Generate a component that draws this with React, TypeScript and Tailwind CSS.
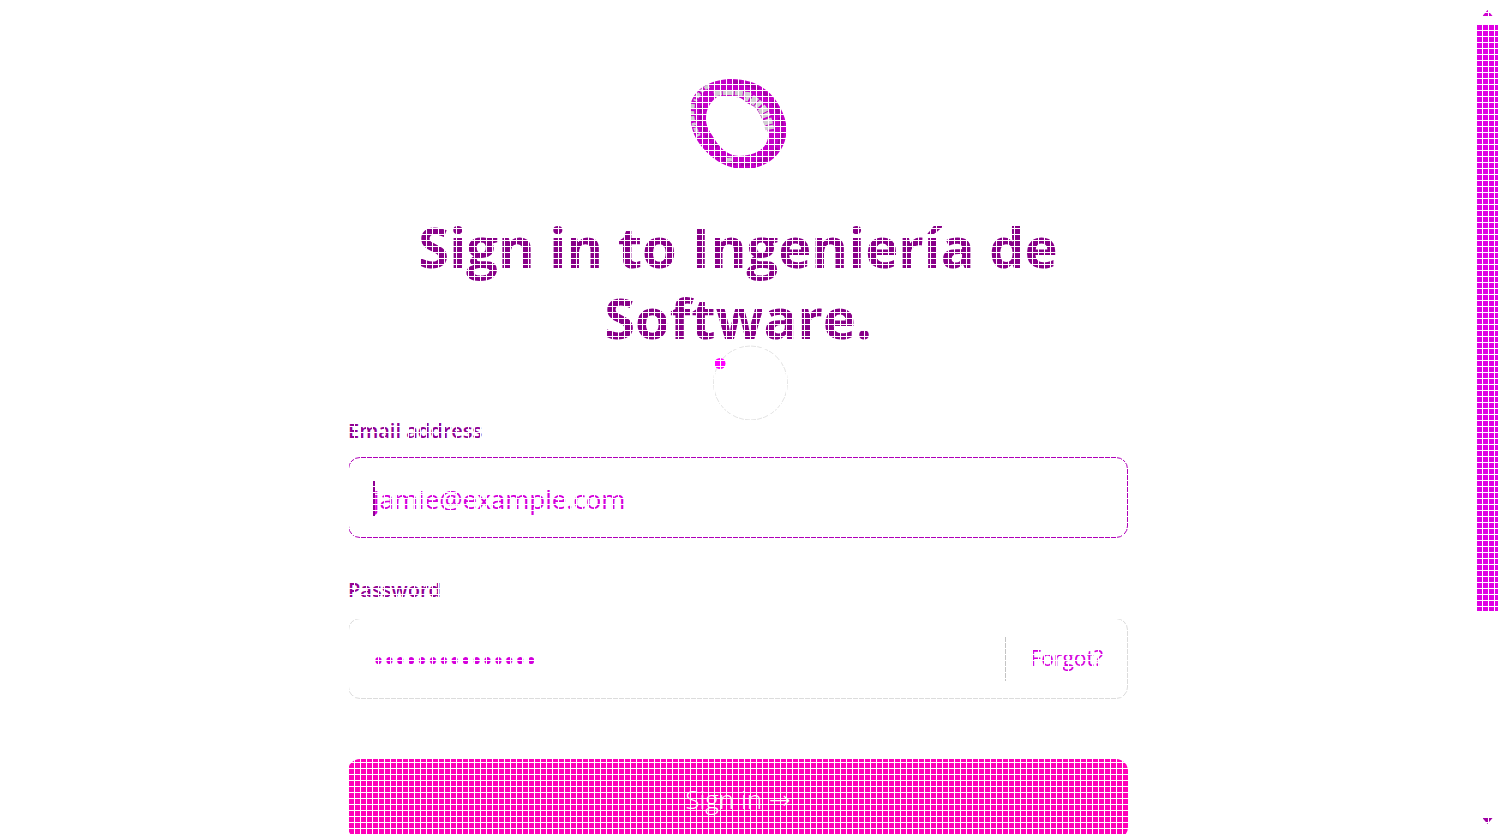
import React from "react";

function Logo() {
  return (
    <svg className="h-[90px] w-24" viewBox="0 0 96 90" aria-hidden="true">
      <path
        fillRule="evenodd"
        fill="#c400c8"
        d="M42 0C62 0 78 9 87 23C94 34 98 45 96 57C93 76 76 90 54 90C35 90 18 78 7 61C0 50 -1 32 1 24C5 9 22 0 42 0ZM27 18C20 23 16 30 16 40C16 47 19 51 22 56C28 67 37 77 49 77C64 77 77 70 78 58C79 52 76 48 74 44C70 36 68 29 61 26C55 24 53 18 46 18Z"
      />
      <path d="M42 3C59 3 76 12 84 25C94 42 96 61 83 74C69 89 42 88 27 76" fill="none" stroke="#a600a8" strokeWidth="4" strokeDasharray="9 5 14 4" />
      <path d="M24 15C32 13 46 13 60 16" fill="none" stroke="#d0ccd0" strokeWidth="5" strokeDasharray="8 1 11 1" />
      <path d="M56 17C63 20 69 25 73 31C77 38 79 45 80 53" fill="none" stroke="#d2ced2" strokeWidth="9" strokeDasharray="4 2 6 1" />
      <path d="M3 25C1 38 3 46 9 57M19 7C12 10 7 17 5 22M37 81L43 80" fill="none" stroke="#d0ccd0" strokeWidth="4" strokeDasharray="5 2 3 2" />
      <path d="M12 27C8 44 15 58 27 68" fill="none" stroke="#a500a8" strokeWidth="4" strokeDasharray="7 3" />
    </svg>
  );
}

function ScrollRail() {
  return (
    <div className="flex w-6 shrink-0 flex-col items-center pt-[10px] pr-[2px] pb-[10px] pl-px" aria-hidden="true">
      <svg className="h-[6px] w-[11px]" viewBox="0 0 10 6">
        <path d="M5 0L10 6H0Z" fill="#cf00cf" />
      </svg>
      <div className="mt-[9px] w-full basis-[72%] bg-[#e000e4]" />
      <svg className="mt-auto h-[6px] w-[11px]" viewBox="0 0 10 6">
        <path d="M0 0H10L5 6Z" fill="#a000a4" />
      </svg>
    </div>
  );
}

export default function App() {
  return (
    <div className="flex h-screen overflow-hidden bg-white font-['Open_Sans','Noto_Sans',sans-serif]">
      <main className="flex flex-1 justify-center px-6 pt-[79px]">
        <div className="w-full max-w-[780px]">
          <div className="flex justify-center">
            <Logo />
          </div>
          <h1 className="mt-[42px] text-center text-[56px] leading-[71px] font-bold text-[#880088]">
            Sign in to Ingeniería de Software.
          </h1>
          <form className="mt-[62px] flex flex-col" onSubmit={(e) => e.preventDefault()}>
            <label htmlFor="email" className="text-[20px] leading-8 font-semibold text-[#900094]">
              Email address
            </label>
            <div className="relative mt-[10px]">
              <input
                id="email"
                type="email"
                placeholder="jamie@example.com"
                className="block h-[81px] w-full rounded-xl border border-[#b000b8] px-6 pt-[2px] text-[26px] text-[#900094] outline-none placeholder:text-[#d400dc]"
              />
              <span className="absolute top-6 left-[25px] h-[35px] w-[2px] bg-[#900094]" />
            </div>
            <label htmlFor="password" className="mt-9 text-[20px] leading-8 font-semibold text-[#900094]">
              Password
            </label>
            <div className="mt-3 flex h-[81px] items-center rounded-xl border border-[#dcdcdc]">
              <input
                id="password"
                type="password"
                placeholder="•••••••••••••••"
                className="h-full min-w-0 flex-1 px-6 pt-[2px] text-[29px] text-[#d400dc] outline-none placeholder:text-[#d400dc]"
              />
              <a
                href="#forgot"
                className="flex h-[45px] items-center border-l border-[#c4c4c4] px-6 text-[21px] text-[#d400dc]"
              >
                Forgot?
              </a>
            </div>
            <button
              type="submit"
              className="mt-[60px] h-20 w-full rounded-xl bg-[#ff00b8] pt-[2px] text-[26px] font-light text-white"
            >
              Sign in <span className="font-['DejaVu_Sans',sans-serif]">→</span>
            </button>
          </form>
        </div>
      </main>
      <ScrollRail />
      <svg className="absolute top-[345px] left-1/2 h-[76px] w-[76px] -translate-x-1/2" viewBox="0 0 76 76" aria-hidden="true">
        <circle cx="38.5" cy="38" r="37" fill="none" stroke="#e4e4e4" />
        <circle cx="8" cy="18.500" r="5.500" fill="#ff00ff" />
      </svg>
      <div className="pointer-events-none absolute inset-0 bg-[linear-gradient(to_right,#fff_1px,transparent_1px),linear-gradient(to_bottom,#fff_1px,transparent_1px)] bg-[size:6px_6px]" />
    </div>
  );
}
